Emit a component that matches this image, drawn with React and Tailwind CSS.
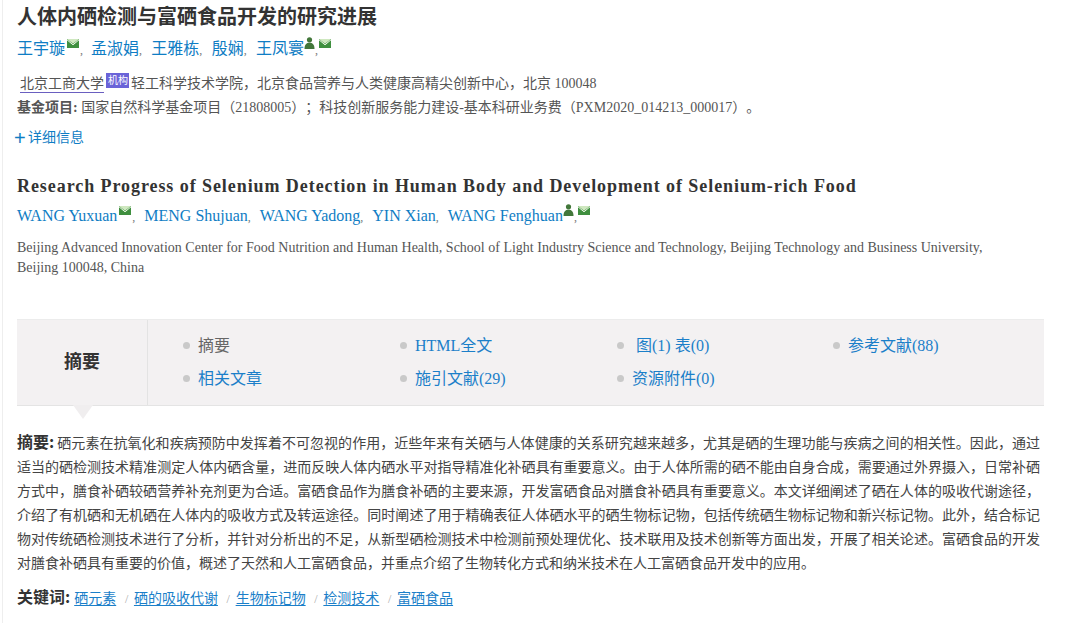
import React from "react";

const stack = "font-['Liberation_Serif','Noto_Sans_CJK_SC',serif]";

const Mail = ({ first }) => (
  <svg width="12" height="9" viewBox="0 0 12 9" className={`inline-block align-[6px] mr-px ${first ? "ml-[2px]" : "ml-px"}`}>
    <rect width="12" height="9" fill="#3f8f3f" />
    <path d="M0 0 L6 4.8 L12 0 Z" fill="#cfe8c0" />
    <path d="M0 0.8 L6 5.8 L12 0.8" fill="none" stroke="#eef8e8" strokeWidth="1" />
  </svg>
);

const Person = () => (
  <svg width="11" height="12" viewBox="0 0 11 12" className="inline-block align-[5px]">
    <circle cx="5.5" cy="2.8" r="2.6" fill="#42773a" />
    <path d="M0.5 12 C0.5 7.5 2.5 5.8 5.5 5.8 C8.5 5.8 10.5 7.5 10.5 12 Z" fill="#42773a" />
  </svg>
);

const Bullet = () => <span className="w-[7px] h-[7px] rounded-full bg-[#c9c9c9] shrink-0" />;

const zhAuthors = ["王宇璇", "孟淑娟", "王雅栋", "殷娴", "王凤寰"];
const enAuthors = ["WANG Yuxuan", "MENG Shujuan", "WANG Yadong", "YIN Xian", "WANG Fenghuan"];

const navs = [
  { label: "摘要", active: true },
  { label: "HTML全文" },
  { label: "图(1) 表(0)", indent: true },
  { label: "参考文献(88)" },
  { label: "相关文章" },
  { label: "施引文献(29)" },
  { label: "资源附件(0)" },
];

const keywords = ["硒元素", "硒的吸收代谢", "生物标记物", "检测技术", "富硒食品"];

const abstractLines = [
  "硒元素在抗氧化和疾病预防中发挥着不可忽视的作用，近些年来有关硒与人体健康的关系研究越来越多，尤其是硒的生理功能与疾病之间的相关性。因此，通过",
  "适当的硒检测技术精准测定人体内硒含量，进而反映人体内硒水平对指导精准化补硒具有重要意义。由于人体所需的硒不能由自身合成，需要通过外界摄入，日常补硒",
  "方式中，膳食补硒较硒营养补充剂更为合适。富硒食品作为膳食补硒的主要来源，开发富硒食品对膳食补硒具有重要意义。本文详细阐述了硒在人体的吸收代谢途径，",
  "介绍了有机硒和无机硒在人体内的吸收方式及转运途径。同时阐述了用于精确表征人体硒水平的硒生物标记物，包括传统硒生物标记物和新兴标记物。此外，结合标记",
  "物对传统硒检测技术进行了分析，并针对分析出的不足，从新型硒检测技术中检测前预处理优化、技术联用及技术创新等方面出发，开展了相关论述。富硒食品的开发",
  "对膳食补硒具有重要的价值，概述了天然和人工富硒食品，并重点介绍了生物转化方式和纳米技术在人工富硒食品开发中的应用。",
];

export default function App() {
  return (
    <div className={`h-[623px] w-[1068px] overflow-hidden bg-white ${stack} text-[#555] [text-spacing-trim:space-all]`}>
      <div className="h-full ml-[2px] border-l border-[#eeeeee] pl-[14px] w-[1042px]">
        <h1 className="text-[20px] leading-[28px] font-bold text-[#333] pt-[2px] h-[30px] font-['Noto_Sans_CJK_SC',sans-serif]">
          人体内硒检测与富硒食品开发的研究进展
        </h1>
        <div className="mt-[5px] text-[16px] leading-[28px] text-[#0f7dc4] whitespace-nowrap">
          {zhAuthors.map((name, i) => (
            <span key={name}>
              {name}
              {i === 0 && <Mail first />}
              {i === 4 && <Person />}
              <span className="text-[#777] text-[12px]">,</span>
              {i < 4 && <span className={i === 0 ? "inline-block w-[8px]" : "inline-block w-[9.3px]"} />}
              {i === 4 && <Mail />}
            </span>
          ))}
        </div>
        <div className="mt-[8px] text-[14px] leading-[24px] whitespace-nowrap pl-[3px]">
          <span className="border-b border-[#6a5fc0] pb-[1px]">北京工商大学</span>
          <span className="inline-block align-[4px] bg-[#6a63d8] text-white text-[10px] leading-[15px] px-[2px] ml-[2px] mr-[2px] w-[23px] h-[15px]">机构</span>
          轻工科学技术学院，北京食品营养与人类健康高精尖创新中心，北京 100048
        </div>
        <div className="text-[14px] leading-[24px] whitespace-nowrap">
          <b className="text-[#555]">基金项目:</b> 国家自然科学基金项目（21808005）；科技创新服务能力建设-基本科研业务费（PXM2020_014213_000017）。
        </div>
        <div className="mt-[6px] -ml-[3px] text-[14px] leading-[24px] text-[#0f7dc4] flex items-center">
          <span className="text-[20px] leading-none w-[14px] font-['Liberation_Sans',sans-serif]">+</span>详细信息
        </div>

        <h2 className="mt-[23px] text-[18px] leading-[26px] font-bold text-[#333] tracking-[0.93px] whitespace-nowrap">
          Research Progress of Selenium Detection in Human Body and Development of Selenium-rich Food
        </h2>
        <div className="mt-[3px] text-[16px] leading-[28px] text-[#0f7dc4] whitespace-nowrap">
          {enAuthors.map((name, i) => (
            <span key={name}>
              {name}
              {i === 0 && <Mail first />}
              {i === 4 && <Person />}
              <span className="text-[#777] text-[12px]">,</span>
              {i < 4 && <span className="inline-block w-[9px]" />}
              {i === 4 && <Mail />}
            </span>
          ))}
        </div>
        <p className="mt-[7px] text-[14px] leading-[20px] w-[990px]">
          Beijing Advanced Innovation Center for Food Nutrition and Human Health, School of Light Industry Science and Technology, Beijing Technology and Business University, Beijing 100048, China
        </p>

        <div className="mt-[41px] relative flex h-[87px] bg-[#f3f1f2] border-b border-[#e4e4e4] border-t-[#ececec] border-t w-[1027px]">
          <div className="w-[131px] shrink-0 border-r border-[#e3e3e3] flex items-center justify-center pb-[4px] font-bold text-[18px] text-[#333] font-['Noto_Sans_CJK_SC',sans-serif]">
            摘要
          </div>
          <div className="flex-1 min-w-0 grid grid-cols-[217px_217px_216px_1fr] grid-rows-[33px_33px] pl-[35px] pt-[9px] text-[16px]">
            {navs.map((n) => (
              <div key={n.label} className="flex items-center gap-[8px] whitespace-nowrap">
                <Bullet />
                <span className={`${n.active ? "text-[#666]" : "text-[#1b7fc9]"} ${n.indent ? "ml-[4px]" : ""}`}>{n.label}</span>
              </div>
            ))}
          </div>
          <span className="absolute left-[56px] top-full w-0 h-0 border-x-[10px] border-x-transparent border-t-[14px] border-t-[#f0eeef]" />
        </div>

        <div className="mt-[23px] text-[14px] leading-[24px] text-[#444] whitespace-nowrap">
          {abstractLines.map((line, i) => (
            <div key={i} className="w-[1023px] [text-align-last:justify]" style={i === abstractLines.length - 1 ? { textAlignLast: "left" } : undefined}>
              {i === 0 && <b className="text-[16px] text-[#333] font-bold font-['Noto_Sans_CJK_SC',sans-serif] mr-[3px]">摘要:</b>}
              {line}
            </div>
          ))}
        </div>
        <div className="mt-[8px] text-[14px] leading-[24px] whitespace-nowrap">
          <b className="text-[16px] text-[#333] font-['Noto_Sans_CJK_SC',sans-serif] mr-[4px]">关键词:</b>
          {keywords.map((k, i) => (
            <span key={k}>
              <span className="text-[#1b7fc9] underline underline-offset-2 pr-[3px]">{k}</span>
              {i < keywords.length - 1 && <span className="text-[#aaa] text-[12px] mx-[5.7px]">/</span>}
            </span>
          ))}
        </div>
      </div>
    </div>
  );
}
